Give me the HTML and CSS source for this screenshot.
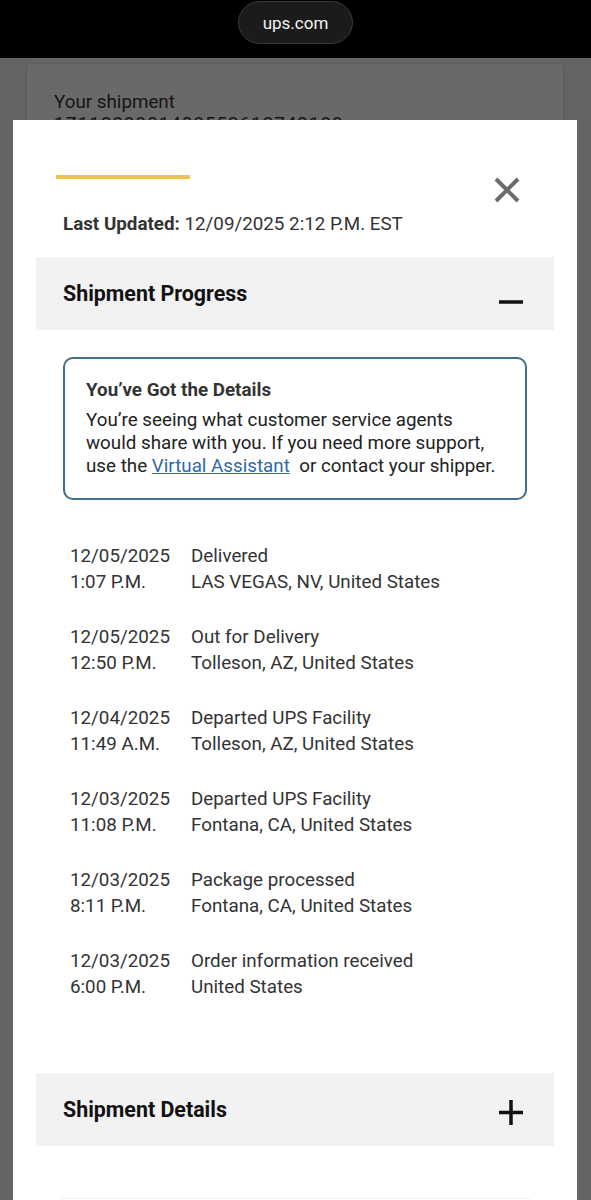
FILE: index.html
```html
<!DOCTYPE html>
<html lang="en">
<head>
<meta charset="UTF-8"/>
<meta name="viewport" content="width=device-width, initial-scale=1.0"/>
<title>UPS Tracking</title>
<link rel="stylesheet" href="styles.css">
</head>
<body>
  <div class="topbar">
    <div class="url-pill">ups.com</div>
  </div>

  <div class="page">
    <div class="page-card">
      <p class="page-label">Your shipment</p>
      <p class="page-track">1Z11233301408552612743188</p>
    </div>
  </div>

  <div class="modal">
    <div class="modal-head">
      <span class="accent"></span>
      <button class="close" aria-label="Close">
        <svg width="28" height="28" viewBox="0 0 28 28"><path d="M3 3 L25 25 M25 3 L3 25" stroke="#6b6b6b" stroke-width="4"/></svg>
      </button>
    </div>
    <p class="updated"><b>Last Updated:</b> 12/09/2025 2:12 P.M. EST</p>

    <div class="section-head">
      <h3>Shipment Progress</h3>
      <svg class="toggle" width="24" height="26" viewBox="0 0 24 26"><path d="M0 19 H24" stroke="#111" stroke-width="3.5"/></svg>
    </div>

    <div class="section-body">
      <div class="notice">
        <h4>You’ve Got the Details</h4>
        <p>You’re seeing what customer service agents would share with you. If you need more support, use the <a href="#">Virtual Assistant</a>&nbsp; or contact your shipper.</p>
      </div>

      <div class="events">
        <div class="event">
          <div class="when">12/05/2025<br>1:07 P.M.</div>
          <div class="what">Delivered<br>LAS VEGAS, NV, United States</div>
        </div>
        <div class="event">
          <div class="when">12/05/2025<br>12:50 P.M.</div>
          <div class="what">Out for Delivery<br>Tolleson, AZ, United States</div>
        </div>
        <div class="event">
          <div class="when">12/04/2025<br>11:49 A.M.</div>
          <div class="what">Departed UPS Facility<br>Tolleson, AZ, United States</div>
        </div>
        <div class="event">
          <div class="when">12/03/2025<br>11:08 P.M.</div>
          <div class="what">Departed UPS Facility<br>Fontana, CA, United States</div>
        </div>
        <div class="event">
          <div class="when">12/03/2025<br>8:11 P.M.</div>
          <div class="what">Package processed<br>Fontana, CA, United States</div>
        </div>
        <div class="event">
          <div class="when">12/03/2025<br>6:00 P.M.</div>
          <div class="what">Order information received<br>United States</div>
        </div>
      </div>
    </div>

    <div class="section-head">
      <h3>Shipment Details</h3>
      <svg class="toggle" width="24" height="26" viewBox="0 0 24 26"><path d="M0 13.5 H24 M12 1 V26" stroke="#111" stroke-width="3.5"/></svg>
    </div>
    <div class="next-card"></div>
  </div>
</body>
</html>
```

FILE: styles.css
```css
body { margin: 0; background: #646464; font-family: Roboto, "Liberation Sans", sans-serif; color: #222; height: 1200px; overflow: hidden; position: relative; }
p, h3, h4 { margin: 0; }

.topbar { height: 58px; background: #000; display: flex; justify-content: center; }
.url-pill { width: 113px; height: 41px; margin-top: 1px; border: 1px solid #3a3a3a; border-radius: 22px; background: #1b1b1b; color: #f2f2f2; font-size: 17px; display: flex; align-items: center; justify-content: center; }

.page { padding: 6px 28px 0 27px; }
.page-card { background: #696969; border-radius: 4px; height: 700px; padding: 27px 27px; box-shadow: 0 1px 4px rgba(0,0,0,0.15); }
.page-label { font-size: 18.8px; color: #151515; line-height: 22px; }
.page-track { font-size: 18.8px; color: #151515; line-height: 22px; letter-spacing: 1px; }

.modal { position: absolute; top: 120px; left: 13px; width: 564px; height: 1100px; background: #fff; padding: 0 23px; box-sizing: border-box; }
.modal-head { display: flex; justify-content: space-between; align-items: flex-start; padding: 55px 33px 0 20px; height: 93px; box-sizing: border-box; }
.accent { display: block; width: 134px; height: 4px; background: #ecc54e; }
.close { background: none; border: none; padding: 0; margin-top: 1px; cursor: pointer; }
.close svg { display: block; }
.updated { padding-left: 27px; font-size: 18.8px; line-height: 22px; color: #333; }
.updated b { font-weight: 700; color: #333; }

.section-head { background: #f2f2f2; height: 73px; margin-top: 22px; display: flex; align-items: center; justify-content: space-between; padding: 0 31px 0 27px; }
.section-head h3 { font-size: 21.4px; font-weight: 700; color: #111; }
.toggle { display: block; margin-top: 4px; }

.section-body { padding: 27px 27px 0 27px; }
.notice { border: 2px solid #3f6f8c; border-radius: 10px; padding: 20px 18px 20px 21px; }
.notice h4 { font-size: 18.8px; font-weight: 700; line-height: 23px; color: #333; margin-bottom: 7px; }
.notice p { font-size: 18.8px; line-height: 23px; color: #222; }
.notice a { color: #2e69a8; }

.events { padding: 43px 0 51px 7px; }
.event { display: flex; font-size: 18.8px; line-height: 26px; color: #333; margin-bottom: 29px; }
.event:last-child { margin-bottom: 0; }
.when { width: 121px; }

.next-card { margin: 52px 23px 0; height: 40px; border-top: 1px solid #f2f2f2; }
```
